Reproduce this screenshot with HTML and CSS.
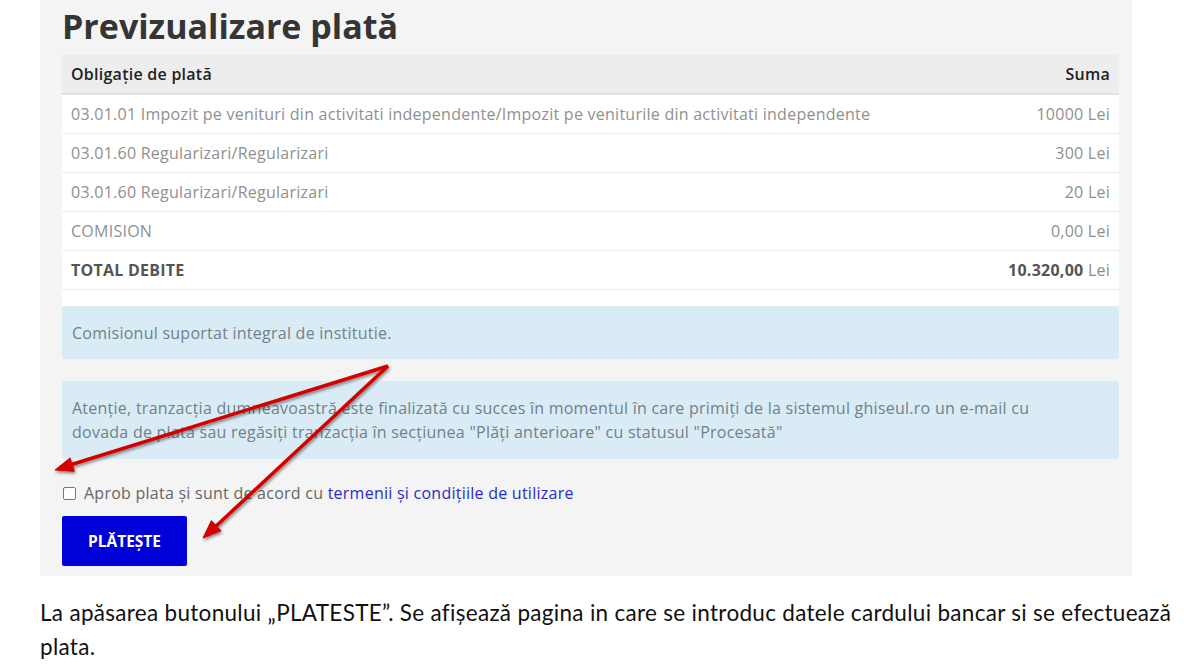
FILE: index.html
```html
<!DOCTYPE html>
<html lang="ro">
<head>
<meta charset="utf-8">
<title>Previzualizare plată</title>
<link rel="stylesheet" href="styles.css">
</head>
<body>
<div class="page">
  <div class="panel">
    <h1 class="title">Previzualizare plată</h1>
    <div class="table-wrap">
      <table class="pay-table">
        <thead>
          <tr><th class="c-left">Obligație de plată</th><th class="c-right">Suma</th></tr>
        </thead>
        <tbody>
          <tr><td>03.01.01 Impozit pe venituri din activitati independente/Impozit pe veniturile din activitati independente</td><td class="c-right">10000 Lei</td></tr>
          <tr><td>03.01.60 Regularizari/Regularizari</td><td class="c-right">300 Lei</td></tr>
          <tr><td>03.01.60 Regularizari/Regularizari</td><td class="c-right">20 Lei</td></tr>
          <tr><td>COMISION</td><td class="c-right">0,00 Lei</td></tr>
          <tr class="total"><td><b>TOTAL DEBITE</b></td><td class="c-right"><b>10.320,00</b> Lei</td></tr>
        </tbody>
      </table>
    </div>
    <div class="alert alert-one">Comisionul suportat integral de institutie.</div>
    <div class="alert alert-two">Atenție, tranzacția dumneavoastră este finalizată cu succes în momentul în care primiți de la sistemul ghiseul.ro un e-mail cu dovada de plată sau regăsiți tranzacția în secțiunea "Plăți anterioare" cu statusul "Procesată"</div>
    <label class="agree"><span class="box"></span>Aprob plata și sunt de acord cu&nbsp;<span class="link">termenii și condițiile de utilizare</span></label>
    <div class="btn">PLĂTEȘTE</div>
  </div>
  <p class="caption">La apăsarea butonului „PLATESTE”. Se afișează pagina in care se introduc datele cardului bancar si se efectuează plata.</p>
  <svg class="arrows" width="1200" height="664" viewBox="0 0 1200 664">
    <defs>
      <filter id="sh" x="-10%" y="-10%" width="120%" height="120%">
        <feDropShadow dx="1" dy="2" stdDeviation="1.5" flood-color="#000" flood-opacity="0.45"/>
      </filter>
    </defs>
    <g filter="url(#sh)" fill="#d40000" stroke="#d40000">
      <line x1="388" y1="366" x2="70" y2="465" stroke-width="3.5"/>
      <polygon points="55,470 74.3,471.3 70.1,457.9" stroke-width="1"/>
      <line x1="388" y1="366" x2="214" y2="528" stroke-width="3.5"/>
      <polygon points="203,538 221,530.8 211.4,520.6" stroke-width="1"/>
    </g>
  </svg>
</div>
</body>
</html>
```
FILE: styles.css
```css
html, body { margin: 0; padding: 0; background: #fff; }
.page { position: relative; width: 1200px; height: 664px; overflow: hidden; }
.panel {
  margin-left: 40px;
  width: 1092px;
  box-sizing: border-box;
  padding: 4px 13px 10px 22px;
  background: #f4f4f4;
  font-family: "Open Sans", sans-serif;
  color: #777;
  font-size: 16px;
  letter-spacing: 0.25px;
}
.title {
  margin: 0;
  font-family: "Open Sans", sans-serif;
  font-weight: 700;
  font-size: 34px;
  line-height: 44px;
  color: #353535;
  letter-spacing: 0;
  height: 51px;
}
.table-wrap { background: #fff; padding-bottom: 16px; }
.pay-table { width: 100%; border-collapse: collapse; }
.pay-table th {
  background: #ededed;
  color: #222;
  font-weight: 600;
  font-size: 16px;
  height: 38px;
  padding: 0 9px;
  border-bottom: 2px solid #e2e2e2;
}
.pay-table td {
  height: 38px;
  padding: 0 9px;
  color: #909090;
  border-bottom: 1px solid #ebebeb;
  white-space: nowrap;
}
.pay-table .total td { color: #8a8a8a; }
.pay-table .total b { color: #555; font-weight: 700; }
.c-left { text-align: left; }
.c-right { text-align: right; }
.alert {
  background: #d9ecf5;
  color: #71808a;
  border-radius: 3px;
  padding: 0 10px;
  line-height: 24px;
}
.alert-one { height: 53px; display: flex; align-items: center; margin-bottom: 22px; }
.alert-two { padding-top: 15px; padding-bottom: 15px; height: 48px; padding-right: 40px; }
.agree {
  display: flex;
  align-items: center;
  margin-top: 23px;
  height: 22px;
  color: #666;
}
.box {
  width: 11px; height: 11px;
  border: 1px solid #777;
  background: #fff;
  border-radius: 2px;
  margin-left: 1px;
  margin-right: 8px;
}
.link { color: #2b2bc8; }
.btn {
  margin-top: 12px;
  width: 125px;
  height: 50px;
  background: #0000d8;
  color: #fff;
  font-weight: 700;
  font-size: 15.5px;
  letter-spacing: 0;
  display: flex;
  align-items: center;
  justify-content: center;
  border-radius: 2px;
}
.caption {
  margin: 0;
  padding: 20px 0 0 40px;
  width: 1145px;
  font-family: Lato, "Open Sans", sans-serif;
  font-size: 22.5px;
  letter-spacing: 0.3px;
  line-height: 34px;
  color: #111;
}
.arrows { position: absolute; left: 0; top: 0; pointer-events: none; }
```
